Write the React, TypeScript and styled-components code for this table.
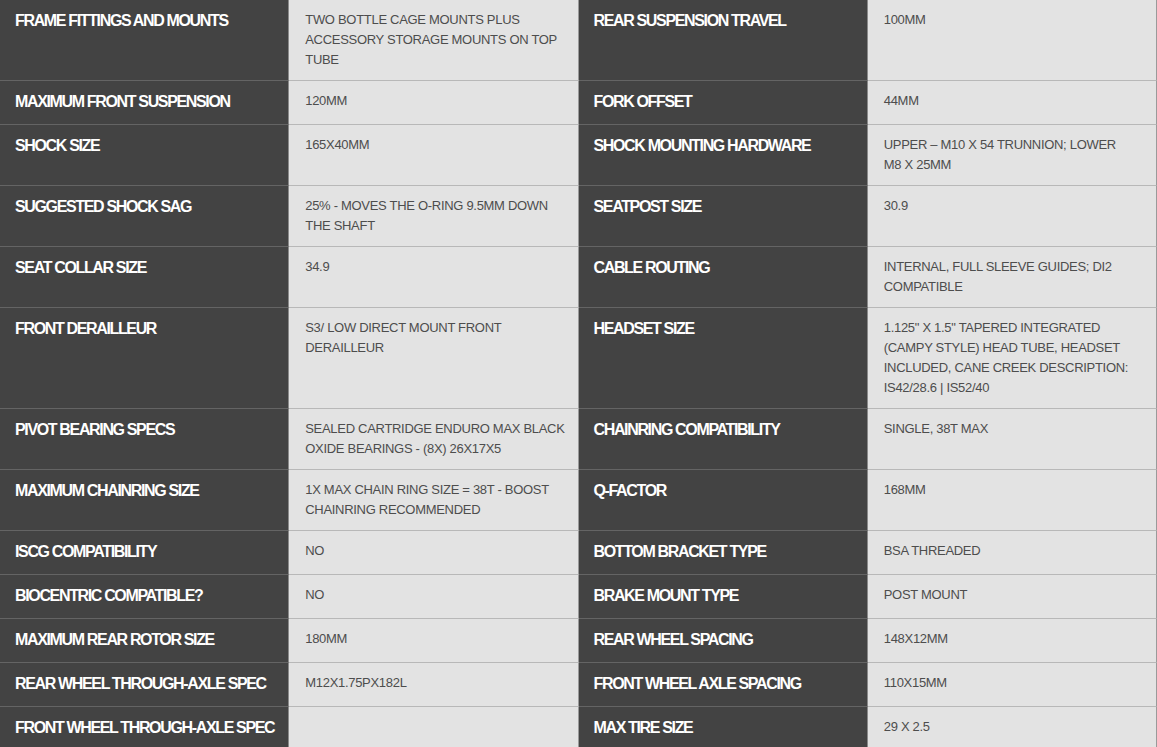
import React from "react";
import styled, { createGlobalStyle } from "styled-components";

const GlobalStyle = createGlobalStyle`
  html, body {
    margin: 0;
    padding: 0;
    background: #e3e3e3;
  }
  * { box-sizing: border-box; }
`;

const Table = styled.div`
  display: flex;
  flex-direction: column;
  width: 1157px;
`;

const Row = styled.div`
  display: grid;
  grid-template-columns: repeat(4, minmax(0, 1fr));
`;

const Label = styled.div`
  background: #434343;
  color: #ffffff;
  font-family: "Liberation Sans", Arial, sans-serif;
  font-weight: 700;
  font-size: 16px;
  letter-spacing: -1.35px;
  line-height: 23px;
  padding: 9px 8px 11px 15px;
  border-bottom: 1px solid #646464;
  border-right: 1px solid #8a8a8a;
  white-space: nowrap;
  overflow: hidden;
`;

const Value = styled.div`
  background: #e3e3e3;
  color: #4d4d4d;
  font-family: "Liberation Sans", Arial, sans-serif;
  font-size: 13px;
  letter-spacing: -0.3px;
  line-height: 20px;
  padding: 10px 8px 10px 16px;
  border-bottom: 1px solid #b8b8b8;
  border-right: 1px solid #9a9a9a;
  overflow: hidden;
`;

const Line = styled.div`
  white-space: nowrap;
`;

type Spec = { label: string; value: string[] };

const rows: [Spec, Spec][] = [
  [
    { label: "FRAME FITTINGS AND MOUNTS", value: ["TWO BOTTLE CAGE MOUNTS PLUS", "ACCESSORY STORAGE MOUNTS ON TOP", "TUBE"] },
    { label: "REAR SUSPENSION TRAVEL", value: ["100MM"] },
  ],
  [
    { label: "MAXIMUM FRONT SUSPENSION", value: ["120MM"] },
    { label: "FORK OFFSET", value: ["44MM"] },
  ],
  [
    { label: "SHOCK SIZE", value: ["165X40MM"] },
    { label: "SHOCK MOUNTING HARDWARE", value: ["UPPER – M10 X 54 TRUNNION; LOWER", "M8 X 25MM"] },
  ],
  [
    { label: "SUGGESTED SHOCK SAG", value: ["25% - MOVES THE O-RING 9.5MM DOWN", "THE SHAFT"] },
    { label: "SEATPOST SIZE", value: ["30.9"] },
  ],
  [
    { label: "SEAT COLLAR SIZE", value: ["34.9"] },
    { label: "CABLE ROUTING", value: ["INTERNAL, FULL SLEEVE GUIDES; DI2", "COMPATIBLE"] },
  ],
  [
    { label: "FRONT DERAILLEUR", value: ["S3/ LOW DIRECT MOUNT FRONT", "DERAILLEUR"] },
    {
      label: "HEADSET SIZE",
      value: [
        '1.125" X 1.5" TAPERED INTEGRATED',
        "(CAMPY STYLE) HEAD TUBE, HEADSET",
        "INCLUDED, CANE CREEK DESCRIPTION:",
        "IS42/28.6 | IS52/40",
      ],
    },
  ],
  [
    { label: "PIVOT BEARING SPECS", value: ["SEALED CARTRIDGE ENDURO MAX BLACK", "OXIDE BEARINGS - (8X) 26X17X5"] },
    { label: "CHAINRING COMPATIBILITY", value: ["SINGLE, 38T MAX"] },
  ],
  [
    { label: "MAXIMUM CHAINRING SIZE", value: ["1X MAX CHAIN RING SIZE = 38T - BOOST", "CHAINRING RECOMMENDED"] },
    { label: "Q-FACTOR", value: ["168MM"] },
  ],
  [
    { label: "ISCG COMPATIBILITY", value: ["NO"] },
    { label: "BOTTOM BRACKET TYPE", value: ["BSA THREADED"] },
  ],
  [
    { label: "BIOCENTRIC COMPATIBLE?", value: ["NO"] },
    { label: "BRAKE MOUNT TYPE", value: ["POST MOUNT"] },
  ],
  [
    { label: "MAXIMUM REAR ROTOR SIZE", value: ["180MM"] },
    { label: "REAR WHEEL SPACING", value: ["148X12MM"] },
  ],
  [
    { label: "REAR WHEEL THROUGH-AXLE SPEC", value: ["M12X1.75PX182L"] },
    { label: "FRONT WHEEL AXLE SPACING", value: ["110X15MM"] },
  ],
  [
    { label: "FRONT WHEEL THROUGH-AXLE SPEC", value: [] },
    { label: "MAX TIRE SIZE", value: ["29 X 2.5"] },
  ],
];

const Pair: React.FC<{ spec: Spec }> = ({ spec }) => (
  <>
    <Label>{spec.label}</Label>
    <Value>
      {spec.value.map((l, i) => (
        <Line key={i}>{l}</Line>
      ))}
    </Value>
  </>
);

export default function App() {
  return (
    <>
      <GlobalStyle />
      <Table>
        {rows.map(([a, b], i) => (
          <Row key={i}>
            <Pair spec={a} />
            <Pair spec={b} />
          </Row>
        ))}
      </Table>
    </>
  );
}
